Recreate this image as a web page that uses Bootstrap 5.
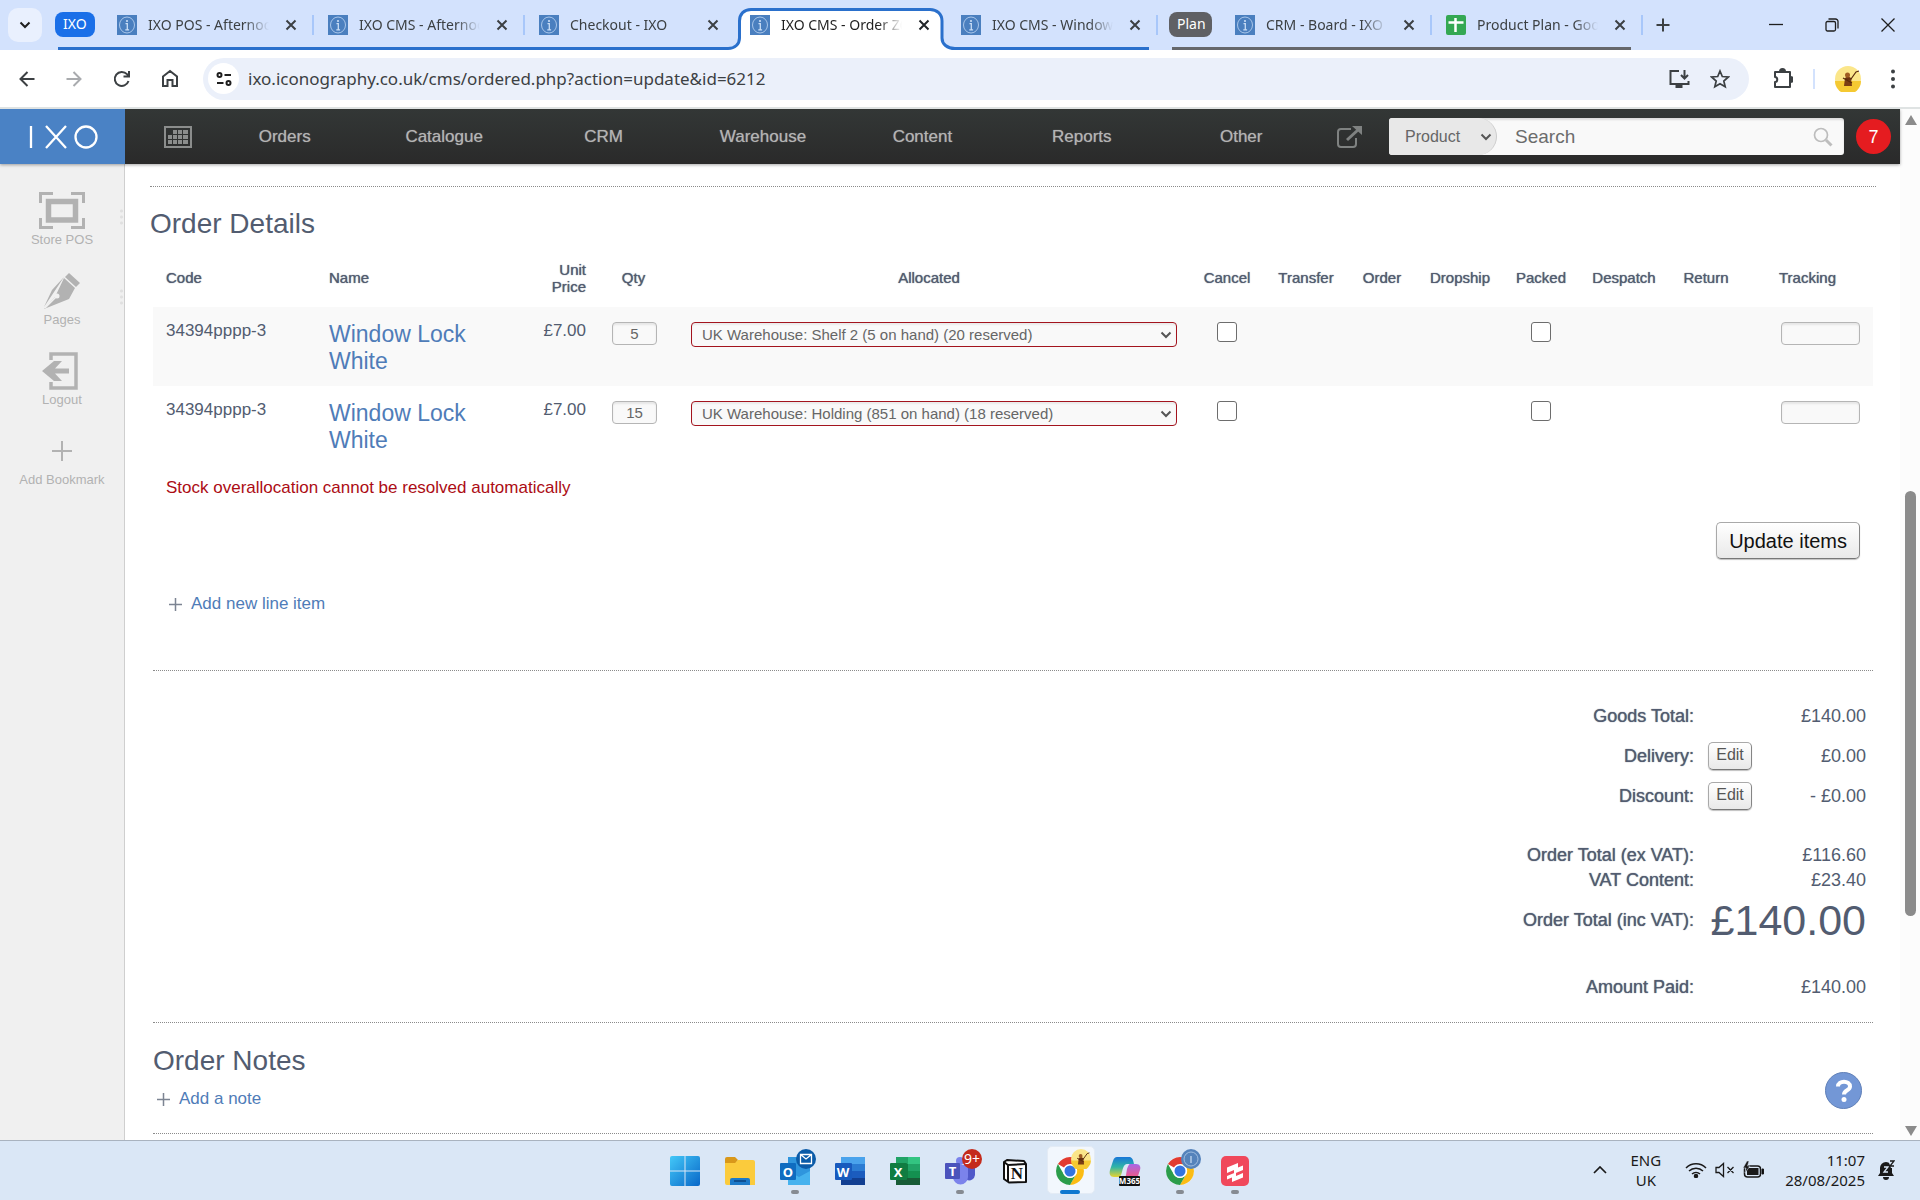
<!DOCTYPE html>
<html lang="en-GB">
<head>
<meta charset="utf-8">
<meta name="viewport" content="width=device-width, initial-scale=1">
<title>IXO CMS - Order</title>
<link href="https://cdn.jsdelivr.net/npm/bootstrap@5.3.0/dist/css/bootstrap.min.css" rel="stylesheet">
<style>
:root{--ui:"Noto Sans","Open Sans",sans-serif;--app:"Liberation Sans",Arial,sans-serif;--slate:#525c70;--link:#4f7cb8;--blue:#2a70cc}
body{font-family:var(--app);font-size:17px;line-height:20px;color:var(--slate);background:#fff;overflow:hidden}
button{font-family:inherit}
svg{display:block;flex:none}
.plain-btn{border:0;background:none;padding:0;color:#3c4043;display:flex;align-items:center;justify-content:center}
/* tab strip */
.tabstrip{height:50px;background:#d3e2fd;font-family:var(--ui);font-size:14px;color:#3c4043}
.tab-search{width:34px;height:34px;border-radius:10px;background:#e9f0fe;margin:8px 13px 0 8px}
.chip{height:25px;border-radius:8px;color:#fff;padding:0 8px;line-height:24px;margin-top:12px}
.chip-blue{background:#1a6fe8;width:40px}
.chip-grey{background:#5f6064;width:43px}
.chip-grey-slot{flex:0 0 60px;padding-left:8px}
.tab-group{position:relative;min-width:0}
.tab-group::before{content:"";position:absolute;left:3px;right:12px;bottom:0;height:3px;background:var(--blue)}
.tab-group.grey-group::before{left:11px;background:#65676b}
.blue-group{flex:0 1 1106px}
.grey-group{flex:0 1 482px}
.b-tab{flex:0 1 211px;min-width:90px;height:100%;position:relative;padding:0 13px 0 14px}
.b-tab .t-title{flex:1;white-space:nowrap;overflow:hidden;margin:0 12px 0 11px;-webkit-mask-image:linear-gradient(90deg,#000 80%,transparent);mask-image:linear-gradient(90deg,#000 80%,transparent)}
.b-tab.sep-r::after{content:"";position:absolute;right:0;top:15px;width:2px;height:20px;background:#a8c7fa}
.b-tab.is-active{color:#1f1f1f;z-index:1}
.is-active>*{position:relative}
.is-active .outline-svg{position:absolute;left:-8px;bottom:0}
.win-btn{width:56px;height:40px}
/* toolbar */
.toolbar-strip{height:57px;font-family:var(--ui);padding:0 13px 0 8px}
.nav-ico{width:48px;height:40px}
.nav-ico.first-ico{width:38px;margin-right:4px}
.omnibox{height:42px;border-radius:21px;background:#ebf0fa;padding:0 19px 0 5px;flex:1;min-width:0;margin-left:9px}
.omnibox .site-info{width:31px;height:31px;border-radius:50%;background:#fff;margin-right:9px}
.url-input{flex:1;min-width:0;border:0;background:none;outline:0;font-size:17px;color:#3c4043;padding:0}
.v-rule{width:2px;height:20px;background:#d3e2fd}
/* app */
.viewport-area{flex:1;min-height:0;border-top:2px solid #dfe3e3;overflow:hidden}
.app-head{height:55px;background:linear-gradient(#333736,#2a2a2a);box-shadow:0 1px 3px rgba(0,0,0,.35);position:relative;z-index:2}
.logo-box{width:125px;background:#4a82c5}
.cal-link{margin-left:39px}
.main-menu{flex:1;padding-left:13px}
.main-menu a{flex:1;text-align:center;color:#b4b4b4;text-decoration:none;font-size:17px;text-shadow:0 0 1px #8a8a8a}
.find-group{width:455px;height:37px;background:#f9f9f9;border-radius:3px;box-shadow:inset 0 2px 2px rgba(0,0,0,.12);margin:0 12px 0 26px;padding-right:11px;overflow:hidden}
.find-group select{width:108px;height:37px;border:0;border-right:1px solid #ccc;border-radius:3px 22px 22px 3px;background-color:#e8e8e8;font-size:16px;color:#666;padding:0 0 0 16px;appearance:none}
.pick-wrap{position:relative}
.pick-wrap svg{position:absolute;right:5px;top:50%;margin-top:-4px;pointer-events:none}
.find-group input{flex:1;min-width:0;border:0;background:none;outline:0;font-size:19px;color:#666;padding:0 0 0 18px}
.find-group input::placeholder{color:#6c6c6c;opacity:1}
.alert-dot{width:35px;height:35px;border-radius:50%;background:#e51c20;color:#fff;font-size:18px;margin-right:9px}
.side-rail{width:125px;background:#f0f0f0;border-right:1px solid #cfcfcf;padding-top:28px;gap:24px}
.side-rail a{color:#b2b2b2;text-decoration:none;font-size:13px;line-height:16px;height:56px;display:flex;flex-direction:column;align-items:center;justify-content:flex-end;gap:3px;position:relative}
.side-rail a.grip::after{content:"";position:absolute;right:0;top:16px;width:5px;height:18px;background:radial-gradient(circle,#e0e0e0 1px,transparent 2px) 0 0/5px 6px}
.pic-box{height:37px;display:flex;align-items:center}
.page-main{flex:1;min-width:0;padding:22px 27px 0 28px}
.wide-head{margin:0 -3px}
.dot-rule{border:0;border-top:1px dotted #8b8b8b;opacity:1;margin:0}
.page-title{font-size:28px;line-height:32px;font-weight:400;margin:0}
.wide-head .page-title{padding:21px 0 4px}
.heavy{font-weight:400;text-shadow:0 0 1px var(--slate)}
.items{table-layout:fixed;width:100%;margin:4px 0 0}
.items th{font-size:15px;line-height:17px;text-align:center;vertical-align:middle;padding:0 8px;height:59px}
.items td{vertical-align:top;padding:14px 13px 0;height:79px;text-align:center}
.items tbody tr:nth-child(odd){background:#f9f9f9}
.items .to-left{text-align:left;padding-left:13px}
.items .to-right{text-align:right;padding-right:13px}
.w-code{width:163px}.w-name{width:213px}.w-unit{width:70px}.w-qty{width:69px}.w-cancel{width:74px}.w-transfer{width:84px}.w-order{width:68px}.w-drop{width:88px}.w-packed{width:74px}.w-desp{width:92px}.w-return{width:72px}.w-track{width:131px}
.item-link{font-size:23px;line-height:27px;color:var(--link);text-decoration:none;display:block}
.small-field{height:23px;border:1px solid #b5b5b5;border-radius:4px;background:#f9f9f9;box-shadow:inset 0 2px 2px rgba(0,0,0,.08);font-size:15px;color:#666;text-align:center;padding:0;display:block}
.items td.ctl{padding-top:15px}
.qty-field{width:45px;margin-left:auto;margin-right:auto}
.track-field{width:79px;margin-left:auto}
.alloc-select{width:100%;height:25px;border:1px solid #a3141e;border-radius:4px;background:#f9f9f9;box-shadow:inset 0 2px 2px rgba(0,0,0,.06);font-size:15px;color:#666;padding:0 24px 0 10px;appearance:none;display:block}
.items td.alloc-cell{padding-left:23px}
.box{appearance:none;width:20px;height:20px;border:1px solid #6d6d6d;border-radius:3px;background:#fff;display:block;margin:0 auto}
.warn{color:#ac0c14;padding:13px 0 0 13px}
.grad-btn{border:1px solid #a9a9a9;border-right-color:#858585;border-bottom-color:#777;border-radius:5px;background:linear-gradient(#fff,#e9e9e9);box-shadow:0 1px 1px rgba(0,0,0,.25)}
.action-bar{padding-right:13px}
.update-btn{font-size:20px;line-height:24px;height:37px;padding:0 12px;color:#111}
.edit-btn{font-size:16px;line-height:18px;width:44px;height:28px;padding:0 0 3px;color:#555}
.plus-link{color:var(--link);text-decoration:none;gap:9px}
.add-line{margin:35px 0 56px 16px}
.totals{padding:25px 0 23px;font-size:18px}
.tot-row{display:flex;justify-content:flex-end;align-items:center;gap:14px;padding-right:7px;min-height:25px}
.tot-row.tall{min-height:40px}
.tot-row.apart{margin-top:26px}
.tot-val{width:158px;display:flex;align-items:center;justify-content:space-between}
.grand{font-size:43px;line-height:56px}
.notes{padding:22px 11px 24px 0}
.help-btn{width:37px;height:37px;border-radius:50%;background:#7397d6;border:1px solid #6080b8}
.scroll-rail{width:20px;background:#fcfcfc;padding:6px 4px 4px 5px}
.scroll-thumb{width:11px;height:425px;border-radius:6px;background:#8b8b8b}
/* taskbar */
.win-bar{height:60px;background:#dae7f6;border-top:1px solid #a9b3bf;font-family:var(--ui);font-size:15px;line-height:20px;color:#1a1a1a;position:relative}
.win-app{width:55px;height:59px;position:relative}
.win-app.live::after{content:"";position:absolute;bottom:6px;left:50%;margin-left:-4px;width:8px;height:4px;border-radius:2px;background:#868b92}
.win-app.front::before{content:"";position:absolute;left:4px;top:5px;width:48px;height:48px;border-radius:5px;background:#f2f7fd;border:1px solid #e3ebf5}
.win-app.front::after{margin-left:-10px;width:20px;background:#0f78d0}
.win-app svg{position:relative;margin:0 auto;overflow:visible}
.tray{position:absolute;right:25px;top:0;height:58px}
.stack{line-height:20px;font-size:15px}
.lang{padding:0 24px}
</style>
<script src="https://cdn.jsdelivr.net/npm/bootstrap@5.3.0/dist/js/bootstrap.bundle.min.js"></script>
</head>
<body class="d-flex flex-column vh-100">

<svg width="0" height="0" class="position-absolute" aria-hidden="true">
 <defs>
  <symbol id="fav" viewBox="0 0 20 20"><rect width="20" height="20" fill="#4a7fbf"/><ellipse cx="10" cy="10" rx="7.5" ry="8" fill="none" stroke="#a9c6ea" stroke-width="1"/><circle cx="10" cy="6" r="1.1" fill="#c9ddf5"/><path d="M8.5 8.7h1.8v6M8.3 14.8h3.8" fill="none" stroke="#c9ddf5" stroke-width="1.3"/></symbol>
  <symbol id="xx" viewBox="0 0 20 20"><path d="M5.5 5.500l9 9m0-9l-9 9" stroke="currentColor" stroke-width="2" fill="none"/></symbol>
  <symbol id="chev" viewBox="0 0 12 8"><path d="M1.500 1.500L6 6l4.500-4.500" stroke="#555" stroke-width="2" fill="none"/></symbol>
  <symbol id="plus" viewBox="0 0 13 13"><path d="M6.500 0v13M0 6.500h13" stroke="#7c8492" stroke-width="1.500"/></symbol>
  <symbol id="chrome" viewBox="0 0 30 30"><circle cx="15" cy="15" r="14" fill="#fff"/><path d="M15 15L2.900 8A14 14 0 0 1 27.100 8H15z" fill="#e23b30"/><path d="M27.100 8A14 14 0 0 1 15 29l6-10.500A7 7 0 0 0 21 11l-6-3z" fill="#fbbc15"/><path d="M15 29A14 14 0 0 1 2.900 8l6 10.500A7 7 0 0 0 21 18.500z" fill="#2b9d4b"/><circle cx="15" cy="15" r="7" fill="#fff"/><circle cx="15" cy="15" r="5.500" fill="#3474e0"/></symbol>
  <symbol id="monk" viewBox="0 0 26 26"><circle cx="13" cy="13" r="13" fill="#fbe68a"/><path d="M0 15a13 13 0 0 0 26 0z" fill="#f5c932"/><path d="M9 20l1-8 3-2 3 2 1 8z" fill="#7a3d14"/><circle cx="12.500" cy="9" r="2.500" fill="#a05c22"/><path d="M8 12l9 5M10 13h7M16 13l5-7 3-1" stroke="#5a2a0c" stroke-width="1.200" fill="none"/></symbol>
 </defs>
</svg>

<header>
 <div class="tabstrip d-flex">
  <button class="plain-btn tab-search" aria-label="Search tabs"><svg width="12" height="12" viewBox="0 0 12 12"><path d="M1.500 3.500L6 8l4.500-4.500" stroke="#1f1f1f" stroke-width="2" fill="none"/></svg></button>
  <div class="d-flex tab-group blue-group">
   <div class="flex-shrink-0 me-2"><div class="chip chip-blue">IXO</div></div>
   <div class="b-tab sep-r d-flex align-items-center"><svg width="20" height="20"><use href="#fav"/></svg><span class="t-title">IXO POS - Afternoon</span><button class="plain-btn" aria-label="Close tab"><svg width="20" height="20"><use href="#xx"/></svg></button></div>
   <div class="b-tab sep-r d-flex align-items-center"><svg width="20" height="20"><use href="#fav"/></svg><span class="t-title">IXO CMS - Afternoon</span><button class="plain-btn" aria-label="Close tab"><svg width="20" height="20"><use href="#xx"/></svg></button></div>
   <div class="b-tab d-flex align-items-center"><svg width="20" height="20"><use href="#fav"/></svg><span class="t-title">Checkout - IXO</span><button class="plain-btn" aria-label="Close tab"><svg width="20" height="20"><use href="#xx"/></svg></button></div>
   <div class="b-tab is-active d-flex align-items-center"><svg class="outline-svg" width="227" height="42" viewBox="0 0 227 42"><path d="M0 42v-1.500C7 40.500 11.500 36 11.500 30V13C11.500 6 16 1.500 23 1.500H202C209 1.500 214 6 214 13V30C214 36 219 40.500 227 40.500V42z" fill="#fff"/><path d="M0 40.500C7 40.500 11.500 36 11.500 30V13C11.500 6 16 1.500 23 1.500H202C209 1.500 214 6 214 13V30C214 36 219 40.500 227 40.500" fill="none" stroke="#2a70cc" stroke-width="3"/></svg><svg width="20" height="20"><use href="#fav"/></svg><span class="t-title">IXO CMS - Order Z62</span><button class="plain-btn text-dark" aria-label="Close tab"><svg width="20" height="20"><use href="#xx"/></svg></button></div>
   <div class="b-tab sep-r d-flex align-items-center"><svg width="20" height="20"><use href="#fav"/></svg><span class="t-title">IXO CMS - Window L</span><button class="plain-btn" aria-label="Close tab"><svg width="20" height="20"><use href="#xx"/></svg></button></div>
  </div>
  <div class="d-flex tab-group grey-group">
   <div class="chip-grey-slot"><div class="chip chip-grey">Plan</div></div>
   <div class="b-tab sep-r d-flex align-items-center"><svg width="20" height="20"><use href="#fav"/></svg><span class="t-title">CRM - Board - IXO C</span><button class="plain-btn" aria-label="Close tab"><svg width="20" height="20"><use href="#xx"/></svg></button></div>
   <div class="b-tab sep-r d-flex align-items-center"><svg width="20" height="20" viewBox="0 0 20 20"><rect width="20" height="20" rx="2" fill="#34a853"/><path d="M9.500 3v14M2.500 7.500h15" stroke="#fff" stroke-width="2.500"/></svg><span class="t-title">Product Plan - Google</span><button class="plain-btn" aria-label="Close tab"><svg width="20" height="20"><use href="#xx"/></svg></button></div>
  </div>
  <button class="plain-btn ms-2 px-1" aria-label="New tab"><svg width="16" height="16" viewBox="0 0 16 16"><path d="M8 1.500v13M1.500 8h13" stroke="#3c4043" stroke-width="2"/></svg></button>
  <div class="d-flex ms-auto align-items-center me-1">
   <button class="plain-btn win-btn" aria-label="Minimise"><svg width="14" height="14"><path d="M0 6.500h14" stroke="#1f1f1f" stroke-width="1.300"/></svg></button>
   <button class="plain-btn win-btn" aria-label="Restore"><svg width="14" height="14" viewBox="0 0 14 14" fill="none" stroke="#1f1f1f" stroke-width="1.300"><rect x="1" y="3.500" width="9.500" height="9.500" rx="1.500"/><path d="M3.500 1h7a2.500 2.500 0 0 1 2.500 2.500v7"/></svg></button>
   <button class="plain-btn win-btn" aria-label="Close"><svg width="14" height="14"><path d="M.500.500l13 13m0-13l-13 13" stroke="#1f1f1f" stroke-width="1.300"/></svg></button>
  </div>
 </div>
 <div class="toolbar-strip d-flex align-items-center">
  <button class="plain-btn nav-ico first-ico" aria-label="Back"><svg width="16" height="16" viewBox="0 0 16 16" fill="none" stroke="#3c4043" stroke-width="2"><path d="M15.500 8H2M8.500 1L1.500 8l7 7"/></svg></button>
  <button class="plain-btn nav-ico" aria-label="Forward"><svg width="16" height="16" viewBox="0 0 16 16" fill="none" stroke="#a9abae" stroke-width="2"><path d="M.500 8H14M7.500 1l7 7-7 7"/></svg></button>
  <button class="plain-btn nav-ico" aria-label="Reload"><svg width="18" height="18" viewBox="0 0 18 18" fill="none" stroke="#3c4043" stroke-width="2"><path d="M15.500 11A7 7 0 1 1 14 4.200L16 6.500M16 1v5.500h-5.500"/></svg></button>
  <button class="plain-btn nav-ico" aria-label="Home"><svg width="18" height="19" viewBox="0 0 18 19" fill="none" stroke="#3c4043" stroke-width="2"><path d="M2 7.500L9 2l7 5.500V17h-4.500v-6h-5v6H2z"/></svg></button>
  <div class="omnibox d-flex align-items-center">
   <button class="plain-btn site-info" aria-label="Site information"><svg width="16" height="14" viewBox="0 0 16 14" fill="none" stroke="#1f1f1f" stroke-width="2"><circle cx="3.500" cy="3" r="2"/><path d="M8.500 3H15M1 11h6.500"/><circle cx="12.500" cy="11" r="2"/></svg></button>
   <input class="url-input" aria-label="Address" value="ixo.iconography.co.uk/cms/ordered.php?action=update&amp;id=6212">
   <button class="plain-btn me-3" aria-label="Install app"><svg width="22" height="20" viewBox="0 0 22 20" fill="none" stroke="#3c4043" stroke-width="2"><path d="M11 2H2.500v13h18v-3M16.500 1v8M13 6l3.500 3.500L20 6"/><path d="M7.500 17.500h7" stroke-width="3"/></svg></button>
   <button class="plain-btn ms-1" aria-label="Bookmark"><svg width="20" height="20" viewBox="0 0 20 20" fill="none" stroke="#3c4043" stroke-width="1.700"><path d="M10 2l2.300 5.500 6 .500-4.500 4 1.400 5.800L10 14.700l-5.200 3.100L6.200 12 1.700 8l6-.500z"/></svg></button>
  </div>
  <button class="plain-btn ps-4 pe-3 me-1" aria-label="Extensions"><svg width="20" height="22" viewBox="0 0 20 22" fill="none" stroke="#3c4043" stroke-width="2"><path d="M2 4h15v15H2v-5c3 0 3-5 0-5z" stroke-linejoin="round"/><path d="M7 3.500a2.500 2.500 0 0 1 5 0M17.500 9a2.500 2.500 0 0 1 0 5" fill="#3c4043"/></svg></button>
  <div class="v-rule"></div>
  <button class="plain-btn ms-3 px-1" aria-label="Profile"><svg width="26" height="26"><use href="#monk"/></svg></button>
  <button class="plain-btn ms-2 ps-1" aria-label="Menu"><svg width="22" height="20" viewBox="0 0 22 20" fill="#3c4043"><circle cx="16" cy="2.500" r="2"/><circle cx="16" cy="10" r="2"/><circle cx="16" cy="17.500" r="2"/></svg></button>
  <span class="pe-2"></span>
 </div>
</header>

<div class="viewport-area d-flex">
 <div class="flex-grow-1 d-flex flex-column" style="min-width:0">
  <nav class="app-head d-flex align-items-center">
   <a href="#" class="logo-box align-self-stretch d-flex align-items-center justify-content-center" aria-label="IXO"><svg width="70" height="24" viewBox="0 0 70 24" fill="none" stroke="#fff" stroke-width="2.300"><path d="M3 1v22M18 1l20 22M38 1L18 23"/><circle cx="58" cy="12" r="10.500"/></svg></a>
   <a href="#" class="cal-link" aria-label="Calendar"><svg width="28" height="22" viewBox="0 0 28 22"><rect x="1" y="1" width="26" height="20" fill="none" stroke="#8b8d8c" stroke-width="2"/><g fill="#8b8d8c"><path d="M9 4h4v4H9zM14 4h4v4h-4zM19 4h5v4h-5zM9 9h4v4H9zM14 9h4v4h-4zM19 9h5v4h-5zM4 9h4v4H4zM4 14h4v4H4zM9 14h4v4H9zM14 14h4v4h-4zM19 14h5v4h-5z"/></g></svg></a>
   <div class="main-menu d-flex"><a href="#">Orders</a><a href="#">Catalogue</a><a href="#">CRM</a><a href="#">Warehouse</a><a href="#">Content</a><a href="#">Reports</a><a href="#">Other</a></div>
   <a href="#" class="ms-3" aria-label="Open shop"><svg width="26" height="22" viewBox="0 0 26 22" fill="none" stroke="#7f8281" stroke-width="2"><path d="M14 3H4a3 3 0 0 0-3 3v12a3 3 0 0 0 3 3h12a3 3 0 0 0 3-3v-6"/><path d="M10 14L22 3" stroke-width="3"/><path d="M15 0h10v9z" fill="#7f8281" stroke="none"/></svg></a>
   <form class="find-group d-flex align-items-center">
    <div class="pick-wrap"><select aria-label="Search in"><option>Product</option></select><svg width="12" height="8"><use href="#chev"/></svg></div>
    <input type="text" placeholder="Search" aria-label="Search">
    <svg width="20" height="20" viewBox="0 0 20 20" fill="none" stroke="#bdbdbd"><circle cx="8" cy="8" r="6.500" stroke-width="1.700"/><path d="M13 13l5.500 5.500" stroke-width="3"/></svg>
   </form>
   <div class="alert-dot d-flex align-items-center justify-content-center">7</div>
  </nav>
  <div class="d-flex flex-grow-1" style="min-height:0">
   <aside class="side-rail d-flex flex-column flex-shrink-0">
    <a href="#" class="grip"><span class="pic-box"><svg width="46" height="37" viewBox="0 0 46 37" fill="none" stroke="#b2b2b2"><path d="M1.500 11V1.500H14M32 1.500h12.500V11M44.500 26v9.500H32M14 35.500H1.500V26" stroke-width="3"/><rect x="9.500" y="9.500" width="27" height="18.500" stroke-width="5.500"/></svg></span>Store POS</a>
    <a href="#" class="grip"><span class="pic-box"><svg width="36" height="36" viewBox="0 0 36 36"><path d="M25 0l11 10-4 4-11-10zM20 5l11 10-6 11L0 36l11-12zM0 34L8 17 20 4z" fill="#b2b2b2"/><path d="M1 35l11-11" stroke="#f0f0f0" stroke-width="1.500"/><circle cx="13" cy="23" r="2.500" fill="#f0f0f0"/></svg></span>Pages</a>
    <a href="#"><span class="pic-box me-1"><svg width="36" height="38" viewBox="0 0 36 38"><path d="M9 8V2h25v34H9v-6" fill="none" stroke="#b2b2b2" stroke-width="3.500"/><path d="M0 19L12 9h8l-7 7.500h14v5H13L20 29h-8z" fill="#b2b2b2"/></svg></span>Logout</a>
    <a href="#"><span class="pic-box"><svg width="20" height="20" viewBox="0 0 20 20"><path d="M10 0v20M0 10h20" stroke="#b2b2b2" stroke-width="2"/></svg></span>Add Bookmark</a>
   </aside>
   <main class="page-main">
    <div class="wide-head"><hr class="dot-rule"><h2 class="page-title">Order Details</h2></div>
    <table class="items">
     <colgroup><col class="w-code"><col class="w-name"><col class="w-unit"><col class="w-qty"><col><col class="w-cancel"><col class="w-transfer"><col class="w-order"><col class="w-drop"><col class="w-packed"><col class="w-desp"><col class="w-return"><col class="w-track"></colgroup>
     <thead><tr><th class="heavy to-left">Code</th><th class="heavy to-left">Name</th><th class="heavy to-right">Unit Price</th><th class="heavy">Qty</th><th class="heavy">Allocated</th><th class="heavy">Cancel</th><th class="heavy">Transfer</th><th class="heavy">Order</th><th class="heavy">Dropship</th><th class="heavy">Packed</th><th class="heavy">Despatch</th><th class="heavy">Return</th><th class="heavy">Tracking</th></tr></thead>
     <tbody>
      <tr><td class="to-left">34394pppp-3</td><td class="to-left"><a href="#" class="item-link">Window Lock White</a></td><td class="to-right">£7.00</td><td class="ctl"><input class="small-field qty-field" value="5" aria-label="Quantity"></td><td class="ctl alloc-cell"><div class="pick-wrap"><select class="alloc-select" aria-label="Allocated"><option>UK Warehouse: Shelf 2 (5 on hand) (20 reserved)</option></select><svg width="12" height="8"><use href="#chev"/></svg></div></td><td class="ctl"><input type="checkbox" class="box" aria-label="Cancel"></td><td></td><td></td><td></td><td class="ctl"><input type="checkbox" class="box" aria-label="Packed"></td><td></td><td></td><td class="ctl"><input class="small-field track-field" aria-label="Tracking"></td></tr>
      <tr><td class="to-left">34394pppp-3</td><td class="to-left"><a href="#" class="item-link">Window Lock White</a></td><td class="to-right">£7.00</td><td class="ctl"><input class="small-field qty-field" value="15" aria-label="Quantity"></td><td class="ctl alloc-cell"><div class="pick-wrap"><select class="alloc-select" aria-label="Allocated"><option>UK Warehouse: Holding (851 on hand) (18 reserved)</option></select><svg width="12" height="8"><use href="#chev"/></svg></div></td><td class="ctl"><input type="checkbox" class="box" aria-label="Cancel"></td><td></td><td></td><td></td><td class="ctl"><input type="checkbox" class="box" aria-label="Packed"></td><td></td><td></td><td class="ctl"><input class="small-field track-field" aria-label="Tracking"></td></tr>
     </tbody>
    </table>
    <p class="warn mb-4">Stock overallocation cannot be resolved automatically</p>
    <div class="d-flex justify-content-end action-bar"><button class="grad-btn update-btn">Update items</button></div>
    <div class="d-flex"><a href="#" class="plus-link add-line d-flex align-items-center"><svg width="13" height="13"><use href="#plus"/></svg>Add new line item</a></div>
    <hr class="dot-rule">
    <section class="totals">
     <div class="tot-row tall"><span class="heavy">Goods Total:</span><span class="tot-val"><i></i>£140.00</span></div>
     <div class="tot-row tall"><span class="heavy">Delivery:</span><span class="tot-val"><button class="grad-btn edit-btn">Edit</button>£0.00</span></div>
     <div class="tot-row tall"><span class="heavy">Discount:</span><span class="tot-val"><button class="grad-btn edit-btn">Edit</button>- £0.00</span></div>
     <div class="tot-row apart"><span class="heavy">Order Total (ex VAT):</span><span class="tot-val"><i></i>£116.60</span></div>
     <div class="tot-row"><span class="heavy">VAT Content:</span><span class="tot-val"><i></i>£23.40</span></div>
     <div class="tot-row"><span class="heavy">Order Total (inc VAT):</span><span class="tot-val grand"><i></i>£140.00</span></div>
     <div class="tot-row apart"><span class="heavy">Amount Paid:</span><span class="tot-val"><i></i>£140.00</span></div>
    </section>
    <hr class="dot-rule">
    <section class="notes d-flex justify-content-between align-items-end">
     <div><h2 class="page-title">Order Notes</h2><a href="#" class="plus-link d-flex align-items-center ms-1 mt-2 pt-1"><svg width="13" height="13"><use href="#plus"/></svg>Add a note</a></div>
     <button class="plain-btn help-btn" aria-label="Help"><svg width="18" height="24" viewBox="0 0 18 24" fill="none" stroke="#fff" stroke-width="4"><path d="M3 7.500C3 1 15 1 15 7.500c0 4-6 3.500-6 8"/><circle cx="9" cy="20.500" r="2.500" fill="#fff" stroke="none"/></svg></button>
    </section>
    <hr class="dot-rule">
   </main>
  </div>
 </div>
 <div class="scroll-rail d-flex flex-column align-items-center">
  <svg width="12" height="10"><path d="M6 0l6 10H0z" fill="#8b8b8b"/></svg>
  <div style="flex:366"></div><div class="scroll-thumb"></div><div style="flex:210"></div>
  <svg width="12" height="10"><path d="M6 10L0 0h12z" fill="#8b8b8b"/></svg>
 </div>
</div>

<footer class="win-bar d-flex justify-content-center">
 <div class="d-flex">
  <button class="plain-btn win-app" aria-label="Start"><svg width="30" height="30" viewBox="0 0 30 30"><defs><linearGradient id="wg" x2="1" y2="1"><stop stop-color="#43c8f8"/><stop offset="1" stop-color="#0867c8"/></linearGradient></defs><path d="M0 2a2 2 0 0 1 2-2h12.500v14.500H0zM15.500 0H28a2 2 0 0 1 2 2v12.500H15.500zM0 15.500h14.500V30H2a2 2 0 0 1-2-2zM15.500 15.500H30V28a2 2 0 0 1-2 2H15.500z" fill="url(#wg)"/></svg></button>
  <button class="plain-btn win-app" aria-label="File Explorer"><svg width="30" height="28" viewBox="0 0 30 28"><path d="M0 2a2 2 0 0 1 2-2h8l3 3-3 4H0z" fill="#d9981a"/><path d="M0 6h10l3-3h15a2 2 0 0 1 2 2v23H2a2 2 0 0 1-2-2z" fill="#fbcb3c"/><path d="M5 28v-5a2 2 0 0 1 2-2h16a2 2 0 0 1 2 2v5z" fill="#1b79c9"/><path d="M9 24h12" stroke="#0d4f92" stroke-width="2"/></svg></button>
  <button class="plain-btn win-app live" aria-label="Outlook"><svg width="30" height="30" viewBox="0 0 30 30"><path d="M8 1h22v28H8z" fill="#2f95dd"/><path d="M8 15l11 6 11-6v14H8z" fill="#46b2ee"/><rect y="7" width="16" height="17" rx="1" fill="#0f6cc0"/><text x="8" y="20.500" font-size="13" font-weight="700" fill="#fff" text-anchor="middle">O</text><circle cx="26" cy="3" r="10" fill="#0a5ba8"/><path d="M20.500-1.500h11v9h-11zl5.500 4.500 5.500-4.500" fill="none" stroke="#fff" stroke-width="1.300"/></svg></button>
  <button class="plain-btn win-app" aria-label="Word"><svg width="30" height="30" viewBox="0 0 30 30"><path d="M6 1h24v7H6z" fill="#4aa3ec"/><path d="M6 8h24v7H6z" fill="#2b7cd3"/><path d="M6 15h24v7H6z" fill="#1b5cbe"/><path d="M6 22h24v7H6z" fill="#123f91"/><rect y="7" width="17" height="17" rx="1" fill="#185abd"/><text x="8" y="20.500" font-size="13" font-weight="700" fill="#fff" text-anchor="middle">W</text></svg></button>
  <button class="plain-btn win-app" aria-label="Excel"><svg width="30" height="30" viewBox="0 0 30 30"><path d="M6 1h12v7H6z" fill="#21a366"/><path d="M18 1h12v7H18z" fill="#33c481"/><path d="M6 8h12v14H6z" fill="#107c41"/><path d="M18 8h12v7H18z" fill="#21a366"/><path d="M18 15h12v7H18z" fill="#149050"/><path d="M6 22h24v7H6z" fill="#185c37"/><rect y="7" width="17" height="17" rx="1" fill="#107c41"/><text x="8" y="20.500" font-size="13" font-weight="700" fill="#fff" text-anchor="middle">X</text></svg></button>
  <button class="plain-btn win-app live" aria-label="Teams"><svg width="30" height="30" viewBox="0 0 30 30"><path d="M19 9h11v10a6 6 0 0 1-8 5z" fill="#5059c9"/><path d="M8 9h15v12a7.500 7.500 0 0 1-15 0z" fill="#7b83eb"/><circle cx="15" cy="5" r="4" fill="#7b83eb"/><rect y="7" width="15" height="16" rx="1" fill="#4b53bc"/><text x="7.500" y="20" font-size="13" font-weight="700" fill="#fff" text-anchor="middle">T</text><circle cx="27" cy="3" r="10" fill="#c42b1c"/><text x="27" y="8" font-size="14" fill="#fff" text-anchor="middle">9+</text></svg></button>
  <button class="plain-btn win-app" aria-label="Notion"><svg width="24" height="24" viewBox="0 0 24 24"><path d="M1 3l3-2 17 1 2 3v18l-17 0.500L1 20z" fill="#fff" stroke="#111" stroke-width="2" stroke-linejoin="round"/><path d="M1 3l4 3 18-1M5 6v17" stroke="#111" stroke-width="2" fill="none"/><text x="14" y="20" font-family="Liberation Serif" font-size="17" font-weight="700" fill="#111" text-anchor="middle">N</text></svg></button>
  <button class="plain-btn win-app live front" aria-label="Chrome"><svg width="30" height="30" viewBox="0 0 30 30"><use href="#chrome" width="30" height="30"/><use href="#monk" x="16" y="-7" width="20" height="20"/></svg></button>
  <button class="plain-btn win-app" aria-label="Microsoft 365"><svg width="30" height="30" viewBox="0 0 30 30"><defs><linearGradient id="ca" x2="0" y2="1"><stop stop-color="#1876d8"/><stop offset=".500" stop-color="#2fb5a6"/><stop offset="1" stop-color="#e6d430"/></linearGradient><linearGradient id="cb" x2="0" y2="1"><stop stop-color="#a666e8"/><stop offset=".600" stop-color="#ea5a8d"/><stop offset="1" stop-color="#f5944c"/></linearGradient></defs><path d="M7 1h12c3 0 4 2 5 7h-7c-3 0-4 4-5 8-1 4-2 5-4 5H4c-4 0-5-3-4-7l3-9c1-3 2-4 4-4z" fill="url(#ca)"/><path d="M20 8h6c4 0 5 3 4 6l-3 9c-1 4-3 5-5 5H12c3-1 3-5 4-9l1-6c1-3 2-5 3-5z" fill="url(#cb)"/><rect x="9" y="20" width="21" height="10" rx="1" fill="#111"/><text x="19.500" y="28" font-size="8" font-weight="700" fill="#fff" text-anchor="middle">M365</text></svg></button>
  <button class="plain-btn win-app live" aria-label="Chrome profile"><svg width="30" height="30" viewBox="0 0 30 30"><use href="#chrome" width="30" height="30"/><circle cx="26" cy="3" r="10" fill="#5583bb"/><circle cx="26" cy="3" r="7" fill="none" stroke="#9fbde0"/><path d="M26 0v7" stroke="#b5cde9" stroke-width="1.500"/></svg></button>
  <button class="plain-btn win-app live" aria-label="Notes app"><svg width="30" height="30" viewBox="0 0 30 30"><rect x="1" y="0" width="28" height="30" rx="5" fill="#f0485b"/><path d="M7 11.500L18 7v4.500l5-2V14l-9 3.700v-3.600L7 17zM7 20l9-3.700v3.600l7-2.900v4.500L12 26v-4.500l-5 2z" fill="#fff"/></svg></button>
 </div>
 <div class="tray d-flex align-items-center">
  <svg width="14" height="8"><path d="M1 7l6-6 6 6" fill="none" stroke="#1a1a1a" stroke-width="1.700"/></svg>
  <div class="stack lang text-center">ENG<br>UK</div>
  <svg width="22" height="16" viewBox="0 0 22 16" fill="none" stroke="#1a1a1a" stroke-width="1.500"><path d="M1 6a14 14 0 0 1 20 0M4 9a10 10 0 0 1 14 0M7 12a6 6 0 0 1 8 0"/><circle cx="11" cy="14" r="1.500" fill="#1a1a1a"/></svg>
  <svg class="ms-2" width="20" height="16" viewBox="0 0 20 16" fill="none" stroke="#1a1a1a" stroke-width="1.300"><path d="M1 5.500h3L8.500 1.500v13L4 10.500H1zM12.500 5l6 6M18.500 5l-6 6"/></svg>
  <svg class="ms-2 me-3" width="22" height="18" viewBox="0 0 22 18"><rect x="1.500" y="5" width="16" height="11" rx="3" fill="none" stroke="#1a1a1a" stroke-width="1.500"/><rect x="4" y="7" width="11.500" height="7" fill="#1a1a1a"/><path d="M19 8v5h1.500V8z" stroke="#1a1a1a"/><path d="M4 0L0 7h3l-1 5 5-7H4.500L6 0z" fill="#1a1a1a" stroke="#dae7f6" stroke-width=".500"/></svg>
  <div class="stack text-end me-2 ps-1">11:07<br>28/08/2025</div>
  <svg class="ms-1" width="18" height="20" viewBox="0 0 18 20"><path d="M1 16l2-3V8a6 6 0 0 1 12 0v5l2 3zM6 17h6a3 3 0 0 1-6 0z" fill="#1a1a1a"/><path d="M7 7h4l-4 5h4" stroke="#dae7f6" stroke-width="1.300" fill="none"/><path d="M11 0h7v8h-4z" fill="#dae7f6"/><path d="M13 1h4l-4 5h4" stroke="#1a1a1a" stroke-width="1.300" fill="none"/></svg>
 </div>
</footer>
</body>
</html>
